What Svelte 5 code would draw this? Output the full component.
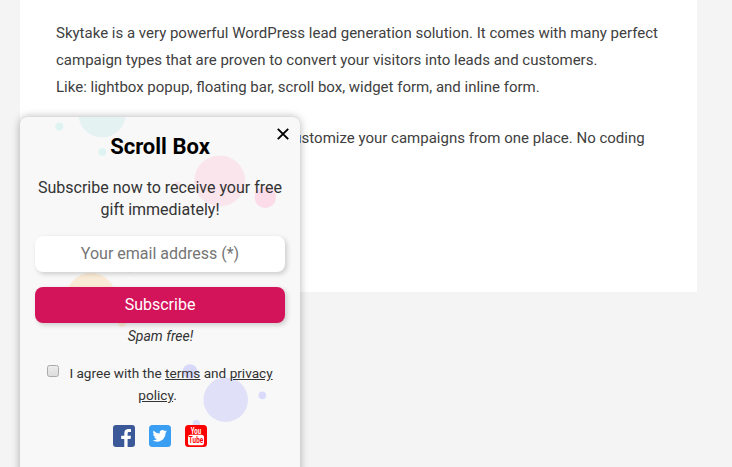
<script>
  const bubbles = [
    { x: 82, y: -3, r: 23.5, fill: '#e4f2f2' },
    { x: 39.3, y: 9.5, r: 4, fill: '#dff3f3' },
    { x: 82.3, y: 35, r: 4, fill: '#dff3f3' },
    { x: 199.7, y: 64, r: 25.5, fill: '#f9e5eb' },
    { x: 245.3, y: 80.2, r: 10.7, fill: '#fbdce8' },
    { x: 157.5, y: 68, r: 3.3, fill: '#fae4ec' },
    { x: 71, y: 180.3, r: 24.5, fill: '#faebd6' },
    { x: 102.2, y: 206, r: 4, fill: '#faebd6' },
    { x: 109.5, y: 151.6, r: 4, fill: '#faebd6' },
    { x: 205.7, y: 282.7, r: 22.3, fill: '#e0e1f8' },
    { x: 170, y: 254.5, r: 7.3, fill: '#d8d9fa' },
    { x: 242.3, y: 278.4, r: 3.8, fill: '#dadbfa' },
    { x: 176.3, y: 306.5, r: 3.7, fill: '#dddefa' },
  ];
</script>

<div class="page">
  <main class="sheet">
    <p>
      Skytake is a very powerful WordPress lead generation solution. It comes with many perfect<br />
      campaign types that are proven to convert your visitors into leads and customers.<br />
      Like: lightbox popup, floating bar, scroll box, widget form, and inline form.
    </p>
    <p class="continued">customize your campaigns from one place. No coding</p>
  </main>

  <aside class="box">
    <svg class="bubbles" width="280" height="351" viewBox="0 0 280 351" aria-hidden="true">
      {#each bubbles as b}
        <circle cx={b.x} cy={b.y} r={b.r} fill={b.fill} />
      {/each}
    </svg>
    <button class="close" aria-label="Close">
      <svg width="12" height="12" viewBox="0 0 12 12">
        <path d="M.8.8 11.2 11.2M11.2.8.8 11.2" stroke="#000" stroke-width="1.9" />
      </svg>
    </button>
    <form class="content" onsubmit={(e) => e.preventDefault()}>
      <h2>Scroll Box</h2>
      <p class="lead">Subscribe now to receive your free gift immediately!</p>
      <input class="email" type="email" placeholder="Your email address (*)" />
      <button class="submit">Subscribe</button>
      <p class="note">Spam free!</p>
      <div class="agree">
        <input type="checkbox" aria-label="Agree" /><span>I agree with the <a href="#terms">terms</a> and <a href="#privacy">privacy<br />policy</a>.</span>
      </div>
      <div class="social">
        <svg width="22" height="22" viewBox="0 0 22 22">
          <rect width="22" height="22" rx="3" fill="#3b5998" />
          <path d="M11.3 22v-8H8.2v-3.3h3.1V8.2c0-2.8 1.7-4.2 4.2-4.2 1.2 0 2 .1 2.5.2v2.8h-1.7c-1.4 0-1.7.7-1.7 1.7v2H18l-.5 3.3h-2.9v8z" fill="#fff" />
        </svg>
        <svg width="22" height="22" viewBox="0 0 22 22">
          <rect width="22" height="22" rx="3.5" fill="#3a9ff2" />
          <path transform="translate(3.6 3.6) scale(.6)" fill="#fff" d="M23.95 4.57a10 10 0 0 1-2.82.77 4.96 4.96 0 0 0 2.16-2.72c-.95.55-2 .96-3.13 1.18a4.92 4.92 0 0 0-8.38 4.48C7.69 8.1 4.07 6.13 1.64 3.16a4.9 4.9 0 0 0 1.52 6.57 4.9 4.9 0 0 1-2.23-.61v.06a4.92 4.92 0 0 0 3.95 4.83 5 5 0 0 1-2.21.08 4.94 4.94 0 0 0 4.6 3.42A9.87 9.87 0 0 1 0 19.54a14 14 0 0 0 7.55 2.21c9.05 0 14-7.5 14-13.98 0-.21 0-.42-.02-.63a9.94 9.94 0 0 0 2.46-2.55z" />
        </svg>
        <svg width="22" height="22" viewBox="0 0 22 22">
          <rect width="22" height="22" rx="3.5" fill="#f00" />
          <rect x="3" y="9.7" width="16" height="10.6" rx="2.6" fill="#fff" />
          <text class="yt" transform="translate(11 8.5) scale(.65 1)" fill="#fff">You</text>
          <text class="yt" transform="translate(11 18.4) scale(.68 1)" fill="#f00">Tube</text>
        </svg>
      </div>
    </form>
  </aside>
</div>

<style>
  :global(body) {
    margin: 0;
    overflow: hidden;
  }
  .page {
    position: relative;
    height: 467px;
    overflow: hidden;
    background: #f4f4f4;
    font-family: Roboto, 'Liberation Sans', sans-serif;
    color: #404040;
  }
  .sheet {
    box-sizing: border-box;
    width: 677px;
    height: 292px;
    margin-left: 20px;
    padding: 20px 0 0 36px;
    background: #fff;
    font-size: 15px;
    line-height: 27px;
    white-space: nowrap;
  }
  p {
    margin: 0;
  }
  .sheet p {
    margin-bottom: 24px;
  }
  .continued {
    padding-left: 229.5px;
  }
  .box {
    position: absolute;
    left: 20px;
    top: 117px;
    width: 280px;
    height: 370px;
    border-radius: 8px;
    background: #f8f8f8;
    box-shadow: 0 0 8px rgba(0, 0, 0, 0.3);
  }
  .bubbles {
    position: absolute;
    left: 0;
    top: 0;
  }
  .close {
    position: absolute;
    top: 11px;
    right: 11px;
    display: flex;
    padding: 0;
    border: 0;
    background: none;
  }
  .content {
    position: relative;
    display: flex;
    flex-direction: column;
    padding: 15px 15px 0;
    text-align: center;
  }
  h2 {
    margin: 0;
    font-size: 22px;
    line-height: 30px;
    font-weight: 700;
    color: #000;
  }
  .lead {
    margin-top: 15px;
    font-size: 16px;
    line-height: 22px;
    color: #333;
  }
  .email,
  .submit {
    box-sizing: border-box;
    height: 36px;
    padding: 0 0 2px;
    border: 0;
    border-radius: 8px;
    font: 16px Roboto, sans-serif;
    text-align: center;
    box-shadow: 2px 2px 5px rgba(0, 0, 0, 0.18);
  }
  .email {
    margin-top: 15px;
    background: #fff;
  }
  .email::placeholder {
    color: #757575;
    opacity: 1;
  }
  .submit {
    margin-top: 15px;
    background: #d4145a;
    color: #fff;
  }
  .note {
    margin-top: 3px;
    padding-left: 1px;
    font-size: 14px;
    line-height: 20px;
    font-style: italic;
    color: #333;
  }
  .agree {
    margin-top: 16px;
    font-size: 13.6px;
    line-height: 22px;
    white-space: nowrap;
    color: #333;
  }
  .agree input {
    appearance: none;
    box-sizing: border-box;
    width: 12px;
    height: 12px;
    margin: 0 10px 0 0;
    vertical-align: 1px;
    border: 1px solid #aaa;
    border-radius: 2.5px;
    background: linear-gradient(#ececec, #dcdcdc);
  }
  .agree span {
    padding-right: 5px;
  }
  a {
    color: inherit;
  }
  .social {
    display: flex;
    justify-content: center;
    gap: 14px;
    margin-top: 19px;
  }
  .yt {
    font-family: Roboto, sans-serif;
    font-size: 9.4px;
    font-weight: 700;
    text-anchor: middle;
  }
</style>
